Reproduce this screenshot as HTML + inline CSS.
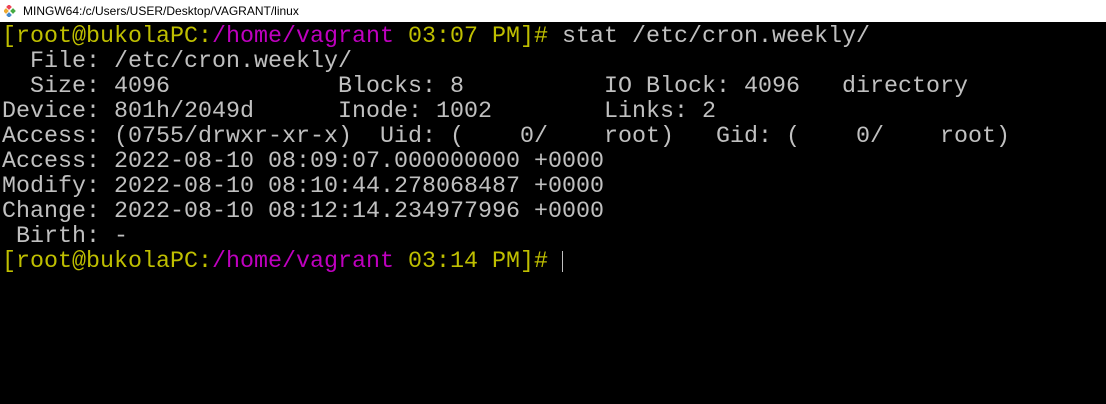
<!DOCTYPE html>
<html><head><meta charset="utf-8"><style>
html,body{margin:0;padding:0;width:1106px;height:404px;overflow:hidden;background:#000}
#tb{position:absolute;left:0;top:0;width:1106px;height:22px;background:#fff;font-family:"Liberation Sans",sans-serif;font-size:12px;color:#000;line-height:22px}
#tb span{position:absolute;left:23px;top:0}
#ic{position:absolute;left:4px;top:5px;width:12px;height:12px}
#t{position:absolute;left:2px;top:25px;font-family:"Liberation Mono",monospace;font-size:23.33px;line-height:25px;color:#c0c0c0;white-space:pre;margin:0}
.y{color:#bfbf00}.m{color:#bf00bf}
#cur{position:absolute;left:562px;top:251px;width:1px;height:21px;background:#c0c0c0}
</style></head><body>
<div id="tb"><svg id="ic" viewBox="0 0 12 12"><rect x="3" y="0" width="4" height="4" transform="rotate(45 5 2)" fill="#e45"/><rect x="7" y="4" width="4" height="4" transform="rotate(45 9 6)" fill="#4a4"/><rect x="3" y="8" width="4" height="4" transform="rotate(45 5 10)" fill="#48c"/><rect x="0" y="4" width="4" height="4" transform="rotate(45 2 6)" fill="#ea3"/></svg><span>MINGW64:/c/Users/USER/Desktop/VAGRANT/linux</span></div>
<pre id="t"><span class="y">[root@bukolaPC:</span><span class="m">/home/vagrant</span><span class="y"> 03:07 PM]#</span> stat /etc/cron.weekly/
  File: /etc/cron.weekly/
  Size: 4096            Blocks: 8          IO Block: 4096   directory
Device: 801h/2049d      Inode: 1002        Links: 2
Access: (0755/drwxr-xr-x)  Uid: (    0/    root)   Gid: (    0/    root)
Access: 2022-08-10 08:09:07.000000000 +0000
Modify: 2022-08-10 08:10:44.278068487 +0000
Change: 2022-08-10 08:12:14.234977996 +0000
 Birth: -
<span class="y">[root@bukolaPC:</span><span class="m">/home/vagrant</span><span class="y"> 03:14 PM]#</span> </pre>
<div id="cur"></div>
</body></html>
